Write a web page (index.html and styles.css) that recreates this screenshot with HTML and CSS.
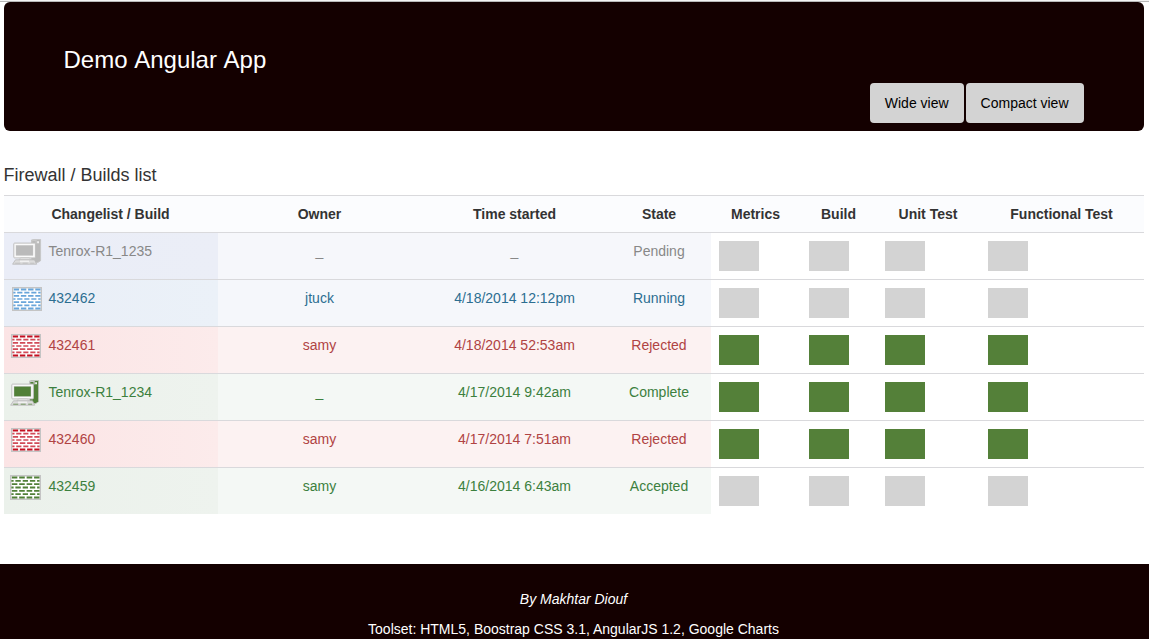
FILE: index.html
```html
<!DOCTYPE html>
<html lang="en">
<head>
<meta charset="utf-8">
<title>Demo Angular App</title>
<link rel="stylesheet" href="styles.css">
</head>
<body>
<svg class="sprites" aria-hidden="true">
  <symbol id="wall" viewBox="0 0 30 24" preserveAspectRatio="none">
    <rect x=".7" y=".7" width="28.6" height="22.6" fill="#fff" stroke="#c4c4c4" stroke-width="1.4"/>
    <g fill="none" stroke="currentColor" stroke-width="1.7">
      <path class="edge" d="M1.8 2.5h5.3m1.8 0h5.4m1.8 0h5.4m1.8 0h5.2M1.8 21.5h5.3m1.8 0h5.4m1.8 0h5.4m1.8 0h5.2"/>
      <path d="M1.3 5.6h2.2m1.7 0h5.2m1.9 0h5.1m1.9 0h5.1m1.8 0h2.4M1.3 12h2.2m1.7 0h5.2m1.9 0h5.1m1.9 0h5.1m1.8 0h2.4M1.3 18.4h2.2m1.7 0h5.2m1.9 0h5.1m1.9 0h5.1m1.8 0h2.4"/>
      <path d="M1.8 8.8h5.3m1.8 0h5.4m1.8 0h5.4m1.8 0h5.2M1.8 15.2h5.3m1.8 0h5.4m1.8 0h5.4m1.8 0h5.2"/>
    </g>
  </symbol>
  <symbol id="computer" viewBox="0 0 30 26">
    <path d="M19.5 1.2L21.5.4h7.1v21.4l-2.8 1.7h-6.3z" fill="currentColor" stroke="#c4c4c4" stroke-width=".8"/>
    <path d="M19.7 4V1.4h4.4v3" fill="none" stroke="#c8c8c8" stroke-width="1.3"/>
    <path d="M25.1 2.3h1.9v1.9h-1.9z" fill="#eee"/>
    <rect x="1.8" y="4.1" width="21.6" height="14.8" rx=".8" fill="#fafafa" stroke="#bfbfbf"/>
    <rect x="4" y="6.3" width="17" height="10.2" fill="currentColor" stroke="#ccc" stroke-width=".4"/>
    <path d="M8.5 19h9l1.4 1.8h-12z" fill="#eee" stroke="#bbb" stroke-width=".6"/>
    <path d="M3.5 20.8h19l2.2 4.4H.6z" fill="#ddd" stroke="#b8b8b8" stroke-width=".8"/>
    <path d="M8 22.2h9" stroke="#fafafa" stroke-width="1"/>
    <path d="M3.2 24.2h5m2.5 0h5m2.5 0h4" stroke="currentColor" stroke-width=".9" opacity=".8"/>
  </symbol>
</svg>
<main class="page">
  <header class="banner">
    <h1 class="banner-title">Demo Angular App</h1>
    <div class="views">
      <button class="view-button">Wide view</button>
      <button class="view-button">Compact view</button>
    </div>
  </header>
  <h2 class="list-title">Firewall / Builds list</h2>
  <table class="builds">
    <colgroup><col class="c-name"><col class="c-owner"><col class="c-time"><col class="c-state"><col class="c-metrics"><col class="c-build"><col class="c-unit"><col class="c-func"></colgroup>
    <thead>
      <tr><th>Changelist / Build</th><th>Owner</th><th>Time started</th><th>State</th><th>Metrics</th><th>Build</th><th>Unit Test</th><th>Functional Test</th></tr>
    </thead>
    <tbody></tbody>
  </table>
</main>
<footer class="footer">
  <p class="author">By Makhtar Diouf</p>
  <p>Toolset: HTML5, Boostrap CSS 3.1, AngularJS 1.2, Google Charts</p>
</footer>
<script src="builds.js"></script>
</body>
</html>
```
FILE: builds.js
```js
const builds = [
  ["pending", "computer", "Tenrox-R1_1235", "_", "_", "Pending", false],
  ["running", "wall", "432462", "jtuck", "4/18/2014 12:12pm", "Running", false],
  ["rejected", "wall", "432461", "samy", "4/18/2014 52:53am", "Rejected", true],
  ["complete", "computer", "Tenrox-R1_1234", "_", "4/17/2014 9:42am", "Complete", true],
  ["rejected", "wall", "432460", "samy", "4/17/2014 7:51am", "Rejected", true],
  ["accepted", "wall", "432459", "samy", "4/16/2014 6:43am", "Accepted", false]
];
document.querySelector(".builds tbody").innerHTML = builds.map(
  ([kind, icon, name, owner, time, state, done]) => `<tr class="${kind}">
    <td class="name"><div class="label"><svg class="icon ${icon}"><use href="#${icon}"/></svg><span>${name}</span></div></td>
    <td>${owner}</td><td>${time}</td><td>${state}</td>
    ${`<td class="result"><div class="box ${done ? "done" : ""}"></div></td>`.repeat(4)}
  </tr>`).join("");
```
FILE: styles.css
```css
* { box-sizing: border-box; }
body {
  margin: 0;
  height: 639px;
  overflow: hidden;
  border-top: 1px solid #f4f4f4;
  background: #fff;
  color: #333;
  font: 14px/20px "Liberation Sans", Arial, sans-serif;
}
.sprites { display: none; }
.page { height: 563px; padding: 0 5.5px 0 3.5px; border-top: 1px solid #b8b8b8; }
.banner {
  height: 129px;
  padding: 41px 60px 8px;
  border-radius: 6px;
  background: #140000;
  color: #fff;
  display: flex;
  flex-direction: column;
  justify-content: space-between;
}
.banner-title { margin: 0; font-size: 24px; line-height: 34px; font-weight: 400; font-kerning: none; }
.views { display: flex; justify-content: flex-end; gap: 2px; }
.view-button {
  height: 40px;
  padding: 0 15px;
  border: 0;
  border-radius: 4px;
  background: #d3d3d3;
  color: #000;
  font: inherit;
}
.list-title { margin: 34px 0 10px; font-size: 18px; line-height: 20px; font-weight: 400; }
.builds { width: 1140px; table-layout: fixed; border-collapse: separate; border-spacing: 0; }
.c-name { width: 214px; }
.c-owner { width: 204px; }
.c-time { width: 186px; }
.c-state { width: 103px; }
.c-metrics { width: 90px; }
.c-build { width: 76px; }
.c-unit { width: 103px; }
.c-func { width: 164px; }
.builds th, .builds td { padding: 8px; border-top: 1px solid #d9d9dc; text-align: center; vertical-align: top; }
.builds th { height: 37px; background: #fbfcfe; }
.builds td { height: 47px; background: var(--bg); }
.builds .name { background: linear-gradient(90deg, var(--from), var(--to)); padding-left: 6.5px; }
.builds .result { background: #fff; }
.label { display: flex; height: 30px; }
.label span { margin-left: auto; width: 161px; text-align: left; }
.icon { width: 30px; height: 24px; margin: -1px 0 0 1px; color: var(--icon); }
.icon.wall { --edge: var(--icon-edge, var(--icon)); }
.icon.computer { height: 26px; margin: -2px 0 0; }
.edge { stroke: var(--edge); stroke-width: 1.9; }
.pending { color: #888; --icon: #bababa; --bg: #f6f7fb; --from: #eaedf7; --to: #ebeef7; }
.running { color: #2c6e91; --icon: #68a5da; --bg: #f5f7fb; --from: #e9eef7; --to: #ebf1f8; }
.rejected { color: #b04343; --icon: #d14a57; --icon-edge: #c40f20; --bg: #fcf2f2; --from: #fbe4e5; --to: #fcebeb; }
.complete, .accepted { color: #3c803e; --icon: #518038; --bg: #f4f8f5; --from: #ebf1eb; --to: #eef3ee; }
.pending .icon.computer { margin-left: 2px; }
.running .icon { margin-left: 2px; }
.accepted .icon { width: 31px; height: 25px; margin-left: 0; }
.box { width: 40px; height: 30px; background: #d3d3d3; }
.done { background: #548039; }
.footer { height: 75px; padding-top: 25px; background: #140000; color: #fff; text-align: center; }
.footer p { margin: 0 2px 10px 0; }
.author { font-style: italic; }
```
